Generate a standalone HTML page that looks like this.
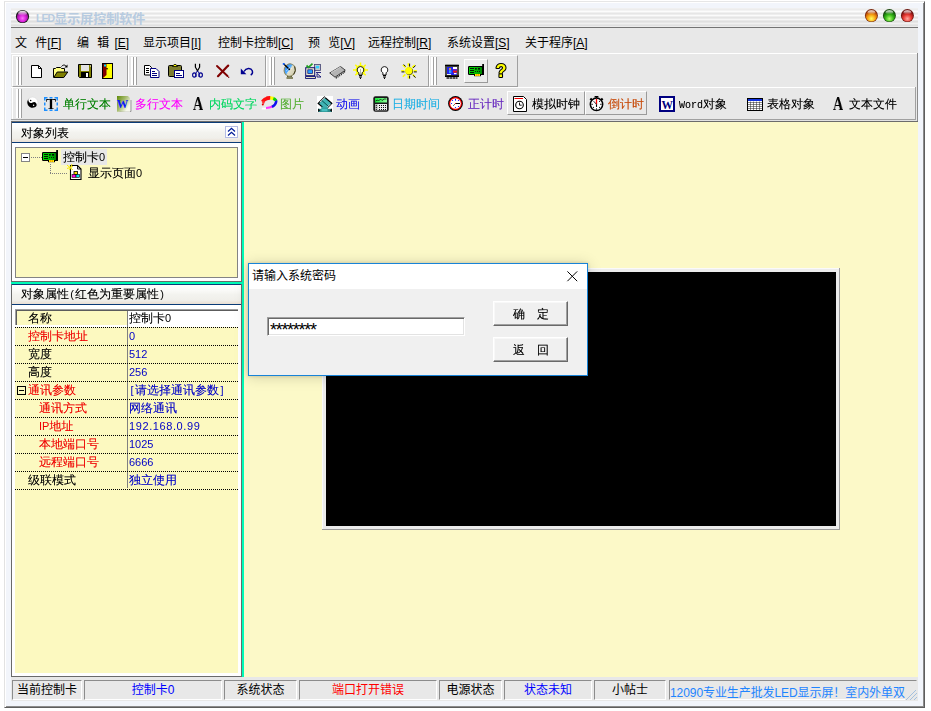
<!DOCTYPE html>
<html lang="zh-CN">
<head>
<meta charset="utf-8">
<title>LED显示屏控制软件</title>
<style>
html,body{margin:0;padding:0;}
body{width:931px;height:711px;overflow:hidden;background:#fff;position:relative;
  font-family:"Liberation Sans","WenQuanYi Zen Hei",sans-serif;font-size:12px;color:#000;}
.a{position:absolute;}
.ya{font-family:"Liberation Sans","Noto Sans CJK SC",sans-serif;}
.ss{font-family:"Liberation Sans","WenQuanYi Zen Hei",sans-serif;text-shadow:0 0 0 rgba(0,0,0,.4);opacity:.999;will-change:transform;}
.t{position:absolute;white-space:pre;line-height:14px;height:14px;font-size:12px;}
svg{position:absolute;overflow:visible;}

/* window frame */
#frame{left:4px;top:1px;width:921px;height:707px;box-sizing:border-box;background:#f2f5fb;
  border-left:1px solid #e2e2e2;border-top:1px solid #e6e6e6;border-right:1px solid #5e5e5e;border-bottom:1px solid #5e5e5e;box-shadow:inset 1px 1px 0 0 #fff,inset -1px -1px 0 0 #8c8c8c;}
#app{left:11px;top:8px;width:907px;height:693px;background:#e8e8e8;}
#title{left:11px;top:8px;width:907px;height:19px;background:linear-gradient(to bottom,#f0f0f0 0px,#f0f0f0 1px,#ececec 1px,#ececec 2px,#f3f3f3 2px,#f3f3f3 3px,#fcfcfc 3px,#fcfcfc 4px,#f0f0f0 4px,#f0f0f0 5px,#e6e6e6 5px,#e6e6e6 6px,#eeeeee 6px,#eeeeee 7px,#fbfbfb 7px,#fbfbfb 8px,#eeeeee 8px,#eeeeee 9px,#e4e4e4 9px,#e4e4e4 10px,#ebebeb 10px,#ebebeb 11px,#f6f6f6 11px,#f6f6f6 12px,#e8e8e8 12px,#e8e8e8 13px,#dfdfdf 13px,#dfdfdf 14px,#e6e6e6 14px,#e6e6e6 15px,#f0f0f0 15px,#f0f0f0 16px,#e6e6e6 16px,#e6e6e6 17px,#e0e0e0 17px,#e0e0e0 18px,#ebebeb 18px,#ebebeb 19px);}
#titleline{left:11px;top:27px;width:907px;height:1px;background:#737373;}
#titletxt{left:36px;top:10px;font-size:13px;font-weight:bold;color:#b7cbe0;line-height:18px;height:18px;}

/* menu */
.m{top:36px;}
.w5{word-spacing:5px;}.w2{word-spacing:1.700px;}

/* toolbars */
.hl{background:#fff;}
.sh{background:#a0a0a0;}
.band{box-sizing:border-box;border-top:1px solid #fff;border-left:1px solid #fff;border-right:1px solid #a0a0a0;border-bottom:1px solid #a0a0a0;}
.grip{width:3px;box-sizing:border-box;background:#fff;border-right:1px solid #a0a0a0;}
.btn{box-sizing:border-box;border-top:1px solid #fff;border-left:1px solid #fff;border-right:1px solid #9a9a9a;border-bottom:1px solid #9a9a9a;}

/* left panels */
.hdr{box-sizing:border-box;border-top:1px solid #0b3c78;border-bottom:1px solid #0b3c78;
  background:linear-gradient(to bottom,#ffffff 0%,#fcfcfa 22%,#f3f3ef 50%,#f0efea 80%,#eadfd3 100%);}
.dot{height:1px;background-image:repeating-linear-gradient(to right,#000 0,#000 1px,transparent 1px,transparent 2px);}

.v{color:#0000c8;text-shadow:0 0 0 rgba(0,0,200,.4);}
.r{color:#f00000;text-shadow:0 0 0 rgba(240,0,0,.4);}
.ns{text-shadow:none;}
.g{opacity:.999;will-change:transform;}
.n{font-size:11px;text-shadow:none;}
.b{display:inline-block;width:6px;text-align:center;}
/* status */
.sp{box-sizing:border-box;top:680px;height:20px;border-top:1px solid #8c8c8c;border-left:1px solid #8c8c8c;border-right:1px solid #fff;border-bottom:1px solid #fff;}
.st{top:683px;text-align:center;}
</style>
</head>
<body>
<div class="a" id="frame"></div>
<div class="a" id="app"></div>

<!-- title bar -->
<div class="a" id="title"></div>
<div class="a" id="titleline"></div>
<svg style="left:15px;top:8.500px" width="15" height="15" viewBox="0 0 15 15">
  <defs>
    <radialGradient id="gm" cx="50%" cy="62%" r="55%"><stop offset="0" stop-color="#ff70ff"/><stop offset=".55" stop-color="#d820d8"/><stop offset="1" stop-color="#8a108a"/></radialGradient>
    <radialGradient id="go" cx="50%" cy="75%" r="65%"><stop offset="0" stop-color="#ffff60"/><stop offset=".55" stop-color="#f8a010"/><stop offset="1" stop-color="#b04008"/></radialGradient>
    <radialGradient id="gg" cx="50%" cy="75%" r="65%"><stop offset="0" stop-color="#b0ff70"/><stop offset=".55" stop-color="#38b818"/><stop offset="1" stop-color="#106008"/></radialGradient>
    <radialGradient id="gr" cx="50%" cy="75%" r="65%"><stop offset="0" stop-color="#ffa8a0"/><stop offset=".55" stop-color="#e83830"/><stop offset="1" stop-color="#801010"/></radialGradient>
    <linearGradient id="gl" x1="0" y1="0" x2="0" y2="1"><stop offset="0" stop-color="#fff" stop-opacity=".95"/><stop offset="1" stop-color="#fff" stop-opacity="0"/></linearGradient>
  </defs>
  <circle cx="7.5" cy="7.5" r="6.6" fill="#1c1c1c"/>
  <circle cx="7.5" cy="7.9" r="5.6" fill="url(#gm)"/>
  <ellipse cx="7.5" cy="4.3" rx="4.3" ry="2.6" fill="url(#gl)"/>
</svg>
<div class="t a ya" id="titletxt"><span style="font-size:10.500px;letter-spacing:-.900px;position:relative;top:-1px">LED</span>显示屏控制软件</div>
<svg style="left:864px;top:8px" width="52" height="16" viewBox="0 0 52 16">
  <circle cx="7.4" cy="7.6" r="6.5" fill="#7a2a10"/><circle cx="7.4" cy="7.9" r="5.7" fill="url(#go)"/><ellipse cx="7.4" cy="4.2" rx="3.8" ry="2" fill="url(#gl)"/>
  <circle cx="25.4" cy="7.6" r="6.5" fill="#1c4a12"/><circle cx="25.4" cy="7.9" r="5.7" fill="url(#gg)"/><ellipse cx="25.4" cy="4.2" rx="3.8" ry="2" fill="url(#gl)"/>
  <circle cx="43.4" cy="7.6" r="6.5" fill="#6a1410"/><circle cx="43.4" cy="7.9" r="5.7" fill="url(#gr)"/><ellipse cx="43.4" cy="4.2" rx="3.8" ry="2" fill="url(#gl)"/>
</svg>

<!-- menu bar -->
<div class="t a ya m" style="left:15px">文<span class="w5"> </span>件[<u>F</u>]</div>
<div class="t a ya m" style="left:77px">编<span class="w5"> </span>辑<span class="w2"> </span>[<u>E</u>]</div>
<div class="t a ya m" style="left:143px">显示项目[<u>I</u>]</div>
<div class="t a ya m" style="left:218px">控制卡控制[<u>C</u>]</div>
<div class="t a ya m" style="left:308px">预<span class="w5"> </span>览[<u>V</u>]</div>
<div class="t a ya m" style="left:368px">远程控制[<u>R</u>]</div>
<div class="t a ya m" style="left:447px">系统设置[<u>S</u>]</div>
<div class="t a ya m" style="left:525px">关于程序[<u>A</u>]</div>

<!--TOOLBARS-->
<!-- toolbar 1 -->
<div class="a hl" style="left:11px;top:53px;width:907px;height:1px"></div>
<div class="a" style="left:917px;top:53px;width:1px;height:68px;background:#8c8c8c"></div>
<div class="a band" style="left:12px;top:55px;width:116px;height:32px"></div>
<div class="a band" style="left:128px;top:55px;width:138px;height:32px"></div>
<div class="a band" style="left:266px;top:55px;width:163px;height:32px"></div>
<div class="a band" style="left:429px;top:55px;width:89px;height:32px"></div>
<div class="a grip" style="left:16px;top:57px;height:28px"></div><div class="a grip" style="left:19px;top:57px;height:28px"></div>
<div class="a grip" style="left:131px;top:57px;height:28px"></div><div class="a grip" style="left:134px;top:57px;height:28px"></div>
<div class="a grip" style="left:269px;top:57px;height:28px"></div><div class="a grip" style="left:272px;top:57px;height:28px"></div>
<div class="a grip" style="left:431px;top:57px;height:28px"></div><div class="a grip" style="left:434px;top:57px;height:28px"></div>

<!-- new -->
<svg style="left:31px;top:65px" width="12" height="13" viewBox="0 0 12 13"><path d="M.5.5h7l3 3v9h-10z" fill="#fff" stroke="#000"/><path d="M7.5.5v3h3" fill="none" stroke="#000"/></svg>
<!-- open -->
<svg style="left:53px;top:64px" width="16" height="14" viewBox="0 0 16 14"><path d="M.5 13.500v-9h2l1-1h4l1 1h3v3" fill="#ffff80" stroke="#000"/><path d="M.8 13.500l3.400-5.500h10.600l-4 5.500z" fill="#808000" stroke="#000"/><path d="M8.500 2.500c1.500-2 4-2 5 .5" fill="none" stroke="#000"/><path d="M11.500 3.500h3v-3z" fill="#000"/></svg>
<!-- save -->
<svg style="left:78px;top:64px" width="14" height="14" viewBox="0 0 14 14"><path d="M.5.5h13v13h-12l-1-1z" fill="#808000" stroke="#000"/><rect x="3" y="1" width="8" height="6" fill="#e4e4e4"/><rect x="3" y="8" width="8" height="5.500" fill="#000"/><rect x="8" y="9" width="2" height="4" fill="#fff"/><rect x="12" y="1.500" width="1" height="1" fill="#fff"/></svg>
<!-- exit -->
<svg style="left:102px;top:63px" width="11" height="16" viewBox="0 0 11 16"><rect x=".5" y=".5" width="10" height="15" fill="#ffff00" stroke="#000"/><path d="M1 1h3.500v11l-3.500 3z" fill="#800000"/><rect x="2" y="1.500" width="2" height="2" fill="#00e0ff"/><rect x="4.300" y="5" width="1.400" height="1.400" fill="#000"/></svg>
<!-- copy -->
<svg style="left:144px;top:65px" width="16" height="13" viewBox="0 0 16 13"><path d="M.5.500h5l2 2v7.500h-7z" fill="#fff" stroke="#000"/><path d="M2 3.500h3M2 5.500h3M2 7.500h3" stroke="#000"/><path d="M6.500 3.500h5.500l3 3v6h-8.500z" fill="#fff" stroke="#000080"/><path d="M8 6.500h3M8 8.500h5M8 10.500h5" stroke="#000080"/></svg>
<!-- paste -->
<svg style="left:168px;top:64px" width="16" height="14" viewBox="0 0 16 14"><rect x=".5" y="1.500" width="13" height="11" rx="1" fill="#7c7c30" stroke="#000"/><path d="M4.500 2.500l1.500-2h2l1.500 2z" fill="#ffff00" stroke="#000" stroke-width=".8"/><rect x="6.500" y="6.500" width="9" height="7" fill="#fff" stroke="#000080"/><path d="M8 9.500h4M8 11.500h6" stroke="#000080"/></svg>
<!-- cut -->
<svg style="left:192px;top:63px" width="11" height="15" viewBox="0 0 11 15"><path d="M3.400 .8v3.400l2.100 3.600l2.100-3.600v-3.400" fill="none" stroke="#000" stroke-width="1.200"/><path d="M5.500 7.800l-1.600 2.200v4M5.500 7.800l1.600 2.200v4" fill="none" stroke="#000090" stroke-width="1"/><ellipse cx="2.300" cy="12" rx="1.700" ry="2.100" fill="none" stroke="#000090" stroke-width="1.100"/><ellipse cx="8.700" cy="12" rx="1.700" ry="2.100" fill="none" stroke="#000090" stroke-width="1.100"/></svg>
<!-- delete -->
<svg style="left:216px;top:65px" width="14" height="13" viewBox="0 0 14 13"><path d="M1 1l10.500 10" stroke="#800000" stroke-width="1.900" fill="none" stroke-linecap="round"/><path d="M12.200 .6l-10.200 10.600" stroke="#800000" stroke-width="2.200" fill="none" stroke-linecap="round"/><circle cx="12.700" cy="12.300" r=".7" fill="#800000"/></svg>
<!-- undo -->
<svg style="left:240px;top:67px" width="14" height="9" viewBox="0 0 14 9"><path d="M4 4.500c2-3.800 7-4 8.300-.8c.6 1.800-.2 3.600-1.600 4.300" fill="none" stroke="#000090" stroke-width="1.400"/><path d="M.8 1.600v5.600h5.600z" fill="#000090"/></svg>
<!-- dish -->
<svg style="left:282px;top:62px" width="15" height="17" viewBox="0 0 15 17"><defs><linearGradient id="dsh" x1="0" y1="0" x2="1" y2=".3"><stop offset="0" stop-color="#1878ff"/><stop offset=".5" stop-color="#58b0ff"/><stop offset=".62" stop-color="#e4e0c8"/><stop offset="1" stop-color="#d4d0b4"/></linearGradient></defs><path d="M5 14.500h5M7.500 13.500v1.500" stroke="#585830" stroke-width="1.200"/><path d="M4.500 16h6.500" stroke="#6c6c40" stroke-width="1.600"/><ellipse cx="7.800" cy="8" rx="5.600" ry="6.200" fill="url(#dsh)" stroke="#8c8860" stroke-width="1" transform="rotate(18 7.800 8)"/><path d="M12.600 4.500q2 4-1 8" fill="none" stroke="#403c20" stroke-width="1"/><path d="M1.800 2l6.200 6" stroke="#000" stroke-width="1.300"/><path d="M4 9l4-4M5 11l5-5" stroke="#fff" stroke-width=".6" opacity=".7"/><rect x=".8" y="1" width="1.800" height="1.800" fill="#1060ff"/></svg>
<!-- computer -->
<svg style="left:305px;top:63px" width="17" height="16" viewBox="0 0 17 16"><rect x="9.500" y="1.500" width="6" height="6" fill="#c8c8c8" stroke="#404070" stroke-width=".8"/><rect x="10.800" y="2.800" width="3.400" height="2.600" fill="#30d0ff"/><rect x=".7" y="4.700" width="9" height="8" fill="#ece8cc" stroke="#101070" stroke-width="1"/><rect x="2.800" y="6.800" width="4.800" height="3.600" fill="#28a0ff" stroke="#101070" stroke-width=".7"/><path d="M.5 13.500h10v2h-10z" fill="#e4e0c4" stroke="#101070" stroke-width=".9"/><path d="M1.500 2.500l2 1.800l4-3.600" stroke="#20a020" stroke-width="1.700" fill="none"/><path d="M11 9.500h5M12 10.500l4 3.500h-4z" stroke="#101070" stroke-width=".9" fill="none"/></svg>
<!-- chip -->
<svg style="left:329px;top:65px" width="17" height="14" viewBox="0 0 17 14"><path d="M.7 8l10.800-6.500l4.800 3.700l-10.300 7z" fill="#b4b4b4" stroke="#303030" stroke-width=".9"/><path d="M2 7.700l9.400-5.600" stroke="#e0e0e0" stroke-width=".8"/><path d="M7.300 11.800v1.800M9 10.700v1.800M10.700 9.500v1.800M12.400 8.400v1.800M14.100 7.200v1.800M15.600 6v1.600" stroke="#202020" stroke-width="1"/></svg>
<!-- bulb on -->
<svg style="left:353px;top:62px" width="16" height="17" viewBox="0 0 16 17"><path d="M7.500 .5v4M2.300 2.800l3 3M12.700 2.800l-3 3M0 8h4M15 8h-4M2.300 13.200l3-2.500M12.700 13.200l-3-2.500" stroke="#ffff00" stroke-width="1.500"/><circle cx="7.500" cy="8" r="5" fill="#ffff00"/><g transform="translate(3 4)"><path d="M4.500 .6a3.300 3.300 0 0 1 1.600 6.200v2.200h-3.200v-2.200a3.300 3.300 0 0 1 1.600-6.200z" fill="#fffff0" stroke="#000" stroke-width=".9"/><path d="M3 9.500h3M3 11h3M4 12.400h1" stroke="#000" stroke-width="1.200"/><path d="M4.500 3v5" stroke="#808080" stroke-width=".6"/></g></svg>
<!-- bulb off -->
<svg style="left:380px;top:66px" width="9" height="13" viewBox="0 0 9 13"><path d="M4.500 .6a3.300 3.300 0 0 1 1.600 6.200v2.200h-3.200v-2.200a3.300 3.300 0 0 1 1.600-6.200z" fill="#fff" stroke="#000" stroke-width=".9"/><path d="M3 9.500h3M3 11h3M4 12.400h1" stroke="#000" stroke-width="1.200"/></svg>
<!-- sun -->
<svg style="left:401px;top:63px" width="16" height="16" viewBox="0 0 16 16"><path d="M7.300 .3v3.200M7.300 12.300v3.200M.2 7.700h3.300M12.500 7.700h3.300M1.800 2l2.600 2.400M11.600 11.400l2.600 2.400M13.800 2l-2.600 2.400M4.400 11.400l-2.600 2.400" stroke="#ffff00" stroke-width="1.500"/><path d="M8.600 .6v3M8.600 12.600v3M.5 8.900h3M12.800 8.900h3M12.200 12.400l2.400 2.200M14.600 2.600l-2.400 2.200M2.600 1.600l2 1.800" stroke="#101000" stroke-width="1"/><circle cx="8.300" cy="8.300" r="3.700" fill="#303000"/><circle cx="7.800" cy="7.700" r="3.700" fill="#ffff00"/></svg>
<!-- monitor -->
<svg style="left:445px;top:64px" width="14" height="15" viewBox="0 0 14 15"><rect x="0" y=".8" width="14" height="12" rx=".8" fill="#4a4a40"/><rect x="0" y=".8" width="14" height="1.400" fill="#000"/><rect x="0" y="11.400" width="14" height="1.600" fill="#000"/><rect x="2" y="3" width="10" height="8" fill="#2424f0"/><rect x="8" y="3" width="4" height="2" fill="#fff"/><rect x="8" y="5" width="4" height="1.600" fill="#7020d0"/><rect x="8" y="6.600" width="4" height="2" fill="#e81818"/><rect x="9" y="9" width="2.500" height="1.200" fill="#fff"/><rect x="2" y="10" width="4" height="1" fill="#f0f0f0"/><circle cx="5" cy="5" r="1" fill="#ffc000"/><rect x="4" y="6.200" width="2.400" height="3" fill="#30a0ff"/><path d="M1.500 14h11" stroke="#202020" stroke-width="1.400" stroke-dasharray="2.500 .5"/></svg>
<!-- card button -->
<div class="a btn" style="left:464px;top:59px;width:24px;height:24px;background:#ececec"></div>
<svg style="left:468px;top:64px" width="17" height="13" viewBox="0 0 17 13"><g id="card"><defs><linearGradient id="cg" x1="0" y1="0" x2="1" y2="0"><stop offset="0" stop-color="#00dc00"/><stop offset=".6" stop-color="#00b400"/><stop offset="1" stop-color="#008800"/></linearGradient></defs><rect x="14.200" y="0" width="1.800" height="11" fill="#000"/><rect x="0" y="2" width="15.500" height="9" rx="1.200" fill="#000"/><rect x="1" y="3" width="13" height="7" rx=".6" fill="url(#cg)"/><path d="M2 4.500h4M2 6.500h4M2 8.500h4" stroke="#001800" stroke-width="1"/><rect x="7" y="4" width="1.700" height="1.600" fill="#001000"/><rect x="10" y="4" width="2" height="1.600" fill="#001000"/><rect x="7" y="7" width="1" height="1" fill="#002800"/><rect x="9" y="7" width="1" height="1" fill="#002800"/><rect x="11" y="7" width="1" height="1" fill="#002800"/><rect x="6" y="10" width="7" height="2.200" fill="#000"/><rect x="7" y="10" width="5" height="2" fill="#ffee00"/><path d="M8.700 10v2M10.400 10v2" stroke="#e08000" stroke-width=".7"/></g></svg>
<!-- help -->
<svg style="left:494px;top:62px;opacity:.999;will-change:transform" width="14" height="17" viewBox="0 0 14 17"><text x="1.700" y="15.200" font-family="Liberation Sans,sans-serif" font-weight="bold" font-size="17.500" fill="#ffff00" stroke="#000" stroke-width="2.200" paint-order="stroke" stroke-linejoin="round">?</text></svg>

<!-- toolbar 2 -->
<div class="a hl" style="left:11px;top:87px;width:905px;height:1px"></div>
<div class="a hl" style="left:12px;top:88px;width:1px;height:31px"></div>
<div class="a sh" style="left:11px;top:119px;width:905px;height:1px"></div>
<div class="a sh" style="left:915px;top:87px;width:1px;height:33px"></div>
<div class="a" style="left:11px;top:120px;width:906px;height:1px;background:#e2e2e2"></div>
<div class="a" style="left:11px;top:121px;width:907px;height:1px;background:#6c6c6c;z-index:3"></div>
<div class="a grip" style="left:16px;top:89px;height:29px"></div><div class="a grip" style="left:19px;top:89px;height:29px"></div>

<!-- yin yang -->
<svg style="left:27px;top:97px" width="11" height="11" viewBox="0 0 11 11"><circle cx="5.500" cy="5.500" r="5.400" fill="#fff" stroke="#d0d0d0" stroke-width=".4"/><path d="M5.500 .2a5.300 5.300 0 0 0 0 10.600a2.650 2.650 0 0 0 0-5.300a2.650 2.650 0 0 1 0-5.300z" fill="#000" transform="rotate(-32 5.500 5.500)"/><circle cx="3.700" cy="3.500" r=".75" fill="#000"/><circle cx="6.600" cy="8.300" r=".75" fill="#fff"/></svg>
<!-- T -->
<svg style="left:44px;top:97px" width="14" height="14" viewBox="0 0 14 14"><path d="M0 .75h3.500M5.500 .75h3M10.500 .75h3.500M0 13.250h3.500M5.500 13.250h3M10.500 13.250h3.500M.75 0v3.500M.75 5.500v3M.75 10.500v3.500M13.250 0v3.500M13.250 5.500v3M13.250 10.500v3.500" fill="none" stroke="#1e90ff" stroke-width="1.500"/></svg>
<div class="t a g" style="left:46px;top:96px;font:bold 15px/16px 'Liberation Serif',serif;height:16px">T</div>
<div class="t a ss" style="left:63px;top:97px;color:#008000;text-shadow:0 0 0 rgba(0,128,0,.4)">单行文本</div>
<!-- W page -->
<svg style="left:117px;top:96px" width="15" height="17" viewBox="0 0 15 17"><defs><linearGradient id="wg" x1="0" y1="0" x2="1" y2=".75"><stop offset="0" stop-color="#5f8a08"/><stop offset=".45" stop-color="#a2b868"/><stop offset=".9" stop-color="#f6f8ec"/></linearGradient></defs><path d="M2.500 15.500h11.500v-11.500" fill="none" stroke="#9a9a9a" stroke-width="1"/><path d="M0 0h11l2 2v13.800h-13z" fill="url(#wg)"/><text x="-.3" y="12" font-family="Liberation Serif,serif" font-weight="bold" font-size="11.500" fill="#0818ff">W</text></svg>
<div class="t a ss" style="left:135px;top:97px;color:#ff00ff;text-shadow:0 0 0 rgba(255,0,255,.4)">多行文本</div>
<div class="t a g" style="left:193px;top:94px;font:bold 18px/20px 'Liberation Serif',serif;height:20px;transform:scaleX(.78);transform-origin:0 0">A</div>
<div class="t a ss" style="left:209px;top:97px;color:#00d860;text-shadow:0 0 0 rgba(0,216,96,.4)">内码文字</div>
<!-- palette -->
<svg style="left:261px;top:96px" width="17" height="14" viewBox="0 0 17 14"><g fill="none" stroke-linecap="butt"><path d="M.8 12.600q2.500 .2 5-.6" stroke="#fff" stroke-width="1.800"/><path d="M5 12.100q3.500-.3 6.500-1.600" stroke="#ff30ff" stroke-width="2"/><path d="M11 10.800q3.800-2 4.200-5.200q.1-.9-.4-1.600" stroke="#1010f0" stroke-width="2.500"/><path d="M15 4.600q-.9-1.700-3.200-2.400" stroke="#10d010" stroke-width="3"/><path d="M12.300 2.400q-1.500-.6-3.400-.6" stroke="#ffff00" stroke-width="3.200"/><path d="M9.200 1.900q-4.800-.2-7.700 3.600" stroke="#ff1010" stroke-width="3.600"/><path d="M1.500 5l1.500 2.500" stroke="#ff3030" stroke-width="2.200"/></g><circle cx="1.800" cy="8.600" r="1" fill="#e00000"/></svg>
<div class="t a ss" style="left:280px;top:97px;color:#58b038;text-shadow:0 0 0 rgba(88,176,56,.4)">图片</div>
<!-- anim -->
<svg style="left:317px;top:96px" width="16" height="16" viewBox="0 0 16 16"><rect width="16" height="16" fill="#fff"/><path d="M1.200 7.500l6.300-6.500l7.300 6.300l-6.300 6.500z" fill="#40b4b4" stroke="#000" stroke-width="1.200"/><path d="M2.800 6.300l6.300-6" stroke="#fff" stroke-width=".9"/><path d="M13.300 8.200l-5.500 5.500" stroke="#fff" stroke-width=".9"/><path d="M4.600 4.300l7 6.200" stroke="#004848" stroke-width=".9"/><path d="M4.300 10.400v3h6.500v-2.500" fill="#38a8a8"/><path d="M1 12.800h14v3.200h-14z" fill="#2c8c8c"/><rect x="4.500" y="13" width="6" height="2.400" fill="#48c0c0"/><path d="M1 12.500l2.200 1.700l-2.200 1.800zM15 12.500l-2.200 1.700l2.200 1.800z" fill="#101010"/></svg>
<div class="t a ss" style="left:336px;top:97px;color:#1414f0;text-shadow:0 0 0 rgba(34,34,221,.4)">动画</div>
<!-- calendar -->
<svg style="left:373px;top:96px" width="16" height="16" viewBox="0 0 16 16"><defs><linearGradient id="cal" x1="0" y1="0" x2="1" y2="0"><stop offset="0" stop-color="#18e838"/><stop offset="1" stop-color="#90ffa0"/></linearGradient></defs><rect x=".3" y=".3" width="15.400" height="15.400" rx="2.200" fill="#181818"/><rect x="2" y="2" width="12" height="4.500" fill="url(#cal)"/><path d="M2.500 5l2-1l1 1l2-2l1.500 1.500l2-1.500h2.500" stroke="#002000" stroke-width=".8" fill="none"/><rect x="2" y="8" width="12" height="6.300" fill="#ececec"/><rect x="2" y="8" width="2.600" height="6.300" fill="#b8b8b8"/><g fill="#101010"><rect x="6" y="9" width="1" height="1"/><rect x="8" y="9" width="1" height="1"/><rect x="10" y="9" width="1" height="1"/><rect x="12" y="9" width="1" height="1"/><rect x="6" y="11" width="1" height="1"/><rect x="8" y="11" width="1" height="1"/><rect x="10" y="11" width="1" height="1"/><rect x="12" y="11" width="1" height="1"/><rect x="6" y="13" width="1" height="1"/><rect x="8" y="13" width="1" height="1"/><rect x="10" y="13" width="1" height="1"/><rect x="12" y="13" width="1" height="1"/><rect x="2.800" y="9" width="1" height="1"/><rect x="2.800" y="11" width="1" height="1"/><rect x="2.800" y="13" width="1" height="1"/></g></svg>
<div class="t a ss" style="left:392px;top:97px;color:#20b0e4;text-shadow:0 0 0 rgba(32,176,228,.4)">日期时间</div>
<!-- clock -->
<svg style="left:448px;top:96px" width="15" height="15" viewBox="0 0 15 15"><circle cx="7.500" cy="7.500" r="7.400" fill="#000"/><circle cx="7.500" cy="7.500" r="6.400" fill="#ff0000"/><circle cx="7.500" cy="7.500" r="5.300" fill="#fff"/><g fill="#0000ff"><rect x="7" y="2.800" width="1" height="1.800"/><circle cx="4.500" cy="4.500" r=".6"/><circle cx="10.500" cy="4.500" r=".6"/><circle cx="3.500" cy="7.500" r=".6"/><circle cx="10.500" cy="10.500" r=".6"/><circle cx="7.500" cy="11.500" r=".6"/></g><path d="M7.500 7.500h4.500" stroke="#000" stroke-width="1"/><path d="M7.500 7.500l-2.300 2.300" stroke="#000" stroke-width="1" stroke-dasharray="1.200 .5"/><circle cx="7.500" cy="7.500" r=".6" fill="#ff0000"/></svg>
<div class="t a ss" style="left:468px;top:97px;color:#6a2cc0;text-shadow:0 0 0 rgba(106,44,192,.4)">正计时</div>
<!-- button analog clock -->
<div class="a btn" style="left:507px;top:91px;width:78px;height:24px"></div>
<svg style="left:513px;top:96px" width="14" height="16" viewBox="0 0 14 16"><path d="M.5 .5h10l3 3v12h-13z" fill="#fff" stroke="#000"/><path d="M1.500 2.500h8.500" stroke="#f00000" stroke-width="1"/><circle cx="6.500" cy="9" r="3.800" fill="none" stroke="#000" stroke-width="1.100"/><path d="M6.500 6.500v2.700h2.200" stroke="#000" stroke-width=".9" fill="none"/></svg>
<div class="t a ss" style="left:532px;top:97px">模拟时钟</div>
<!-- button countdown -->
<div class="a btn" style="left:585px;top:91px;width:62px;height:24px"></div>
<svg style="left:589px;top:96px" width="15" height="15" viewBox="0 0 15 15"><path d="M5.600 .7h3.800" stroke="#000" stroke-width="1.400"/><path d="M7.500 .7v2" stroke="#000" stroke-width="1.200"/><path d="M1.300 2.600l2.400 2M13.700 2.600l-2.400 2" stroke="#000" stroke-width="2.200"/><circle cx="7.500" cy="8.300" r="6.200" fill="#fff" stroke="#000" stroke-width="1.500"/><path d="M7.500 8.300v-5.300" stroke="#ff0000" stroke-width="1.300"/><path d="M7.500 8.300v2.600" stroke="#000" stroke-width="1.100"/><path d="M7.500 8.300l-3-3.200" stroke="#000" stroke-width=".8"/><path d="M2.300 8.300h1.600M11.100 8.300h1.600M7.500 12.300v1.400" stroke="#000" stroke-width=".9"/><g fill="#000"><circle cx="10.600" cy="5.300" r=".6"/><circle cx="4.500" cy="11.300" r=".6"/><circle cx="10.600" cy="11.300" r=".6"/></g></svg>
<div class="t a ss" style="left:608px;top:97px;color:#c84a08;text-shadow:0 0 0 rgba(200,74,8,.4)">倒计时</div>
<!-- word -->
<svg style="left:659px;top:96px" width="16" height="16" viewBox="0 0 16 16"><rect width="16" height="16" fill="#000080"/><rect x="2" y="2" width="12" height="12" fill="#fff"/><text x="2.600" y="12.800" font-family="Liberation Serif,serif" font-weight="bold" font-size="13" fill="#000080" textLength="11.500" lengthAdjust="spacingAndGlyphs">W</text></svg>
<div class="t a ss" style="left:679px;top:97px"><span style="font:10px/14px 'Liberation Mono',monospace">Word</span>对象</div>
<!-- table -->
<svg style="left:747px;top:98px" width="16" height="13" viewBox="0 0 16 13"><rect x=".5" y=".5" width="15" height="12" fill="#fff" stroke="#000"/><rect x="1" y="1" width="14" height="2" fill="#1030e0"/><path d="M1 4.500h14M1 6.500h14M1 8.500h14M1 10.500h14M3.500 3.500v8.500M6.500 3.500v8.500M9.500 3.500v8.500M12.500 3.500v8.500" stroke="#303030" stroke-width=".55"/></svg>
<div class="t a ss" style="left:767px;top:97px">表格对象</div>
<div class="t a g" style="left:833px;top:94px;font:bold 18px/20px 'Liberation Serif',serif;height:20px;transform:scaleX(.78);transform-origin:0 0">A</div>
<div class="t a ss" style="left:849px;top:97px">文本文件</div>
<!--/TOOLBARS-->
<!--LEFT-->
<!-- main yellow area -->
<div class="a" style="left:244px;top:122px;width:674px;height:555px;background:#fcf9c8"></div>
<!-- left panel -->
<div class="a" style="left:11px;top:121px;width:231px;height:556px;background:#fff;box-sizing:border-box;border-left:1px solid #6a6a6a;border-right:1px solid #6a6a6a;border-bottom:1px solid #6a6a6a;border-top:1px solid #746a60"></div>
<div class="a" style="left:242px;top:122px;width:2px;height:555px;background:#00fab6"></div>
<!-- header 1 -->
<div class="a hdr" style="left:12px;top:122px;width:229px;height:21px"></div>
<div class="t a ss" style="left:21px;top:126px">对象列表</div>
<div class="a" style="left:225px;top:126px;width:13px;height:12px;box-sizing:border-box;border:1px solid #b4bce4;background:#fff"></div>
<svg style="left:227px;top:127px" width="9" height="10" viewBox="0 0 9 10"><path d="M1 4.500l3.500-3.200l3.500 3.200M1 8.500l3.500-3.200l3.500 3.200" fill="none" stroke="#001c98" stroke-width="1.250"/></svg>
<!-- tree box -->
<div class="a" style="left:15px;top:147px;width:223px;height:131px;box-sizing:border-box;border:1px solid #848484;background:#fcf9c0"></div>
<div class="a" style="left:21px;top:153px;width:9px;height:9px;box-sizing:border-box;border:1px solid #848484;background:#fff"></div>
<div class="a" style="left:23px;top:157px;width:5px;height:1px;background:#000"></div>
<div class="a" style="left:31px;top:157px;width:11px;height:1px;background-image:repeating-linear-gradient(to right,#808080 0,#808080 1px,transparent 1px,transparent 2px)"></div>
<div class="a" style="left:50px;top:164px;width:1px;height:10px;background-image:repeating-linear-gradient(to bottom,#808080 0,#808080 1px,transparent 1px,transparent 2px)"></div>
<div class="a" style="left:50px;top:173px;width:18px;height:1px;background-image:repeating-linear-gradient(to right,#808080 0,#808080 1px,transparent 1px,transparent 2px)"></div>
<svg style="left:42px;top:150px" width="17" height="13" viewBox="0 0 17 13"><use href="#card"/></svg>
<div class="a" style="left:61px;top:149px;width:46px;height:16px;background:#e8e8e8"></div>
<div class="t a ss" style="left:63px;top:150px">控制卡<span class="n">0</span></div>
<!-- page icon -->
<svg style="left:67px;top:164px" width="15" height="16" viewBox="0 0 15 16"><path d="M3.500 1.500h7l3.500 3.500v10.500h-10.500z" fill="#fff" stroke="#000" stroke-width="1.100"/><path d="M10.500 1.500v3.500h3.500" fill="none" stroke="#000" stroke-width=".9"/><rect x="7" y="7.500" width="3.500" height="3" fill="#ffe000" stroke="#000" stroke-width=".8"/><rect x="5" y="10.500" width="4" height="2.800" fill="#ff00e0" stroke="#000" stroke-width=".6"/><rect x="9" y="10.500" width="3.500" height="2.800" fill="#00e0f0" stroke="#000" stroke-width=".6"/><path d="M0 1l6 5M5 0l-2.500 6M0 4.500l6-2" stroke="#f8e800" stroke-width="1"/></svg>
<div class="t a ss" style="left:88px;top:166px">显示页面<span class="n">0</span></div>

<!-- splitter -->
<div class="a" style="left:11px;top:281px;width:231px;height:1px;background:#6a6a6a"></div>
<div class="a" style="left:11px;top:282px;width:233px;height:2px;background:#00fab6"></div>
<!-- header 2 -->
<div class="a hdr" style="left:12px;top:284px;width:229px;height:21px"></div>
<div class="t a ss" style="left:21px;top:287px">对象属性<span class="n b">(</span>红色为重要属性<span class="n b">)</span></div>
<!-- property grid -->
<div class="a" style="left:15px;top:309px;width:223px;height:364px;background:#fcf9c0"></div>
<div class="a" style="left:15px;top:309px;width:223px;height:1px;background:#a0a0a0"></div>
<div class="a" style="left:15px;top:310px;width:223px;height:1px;background:#5c5c5c"></div>
<div class="a" style="left:15px;top:309px;width:1px;height:17px;background:#a0a0a0"></div>
<div class="a" style="left:16px;top:310px;width:1px;height:16px;background:#5c5c5c"></div>
<div class="a" style="left:128px;top:311px;width:110px;height:15px;background:#fff"></div>
<div class="a" style="left:15px;top:325px;width:223px;height:2px;background:#fff"></div>
<div class="a" style="left:127px;top:311px;width:1px;height:177px;background:#808080"></div>
<div class="a dot" style="left:15px;top:327px;width:224px"></div>
<div class="a dot" style="left:15px;top:345px;width:224px"></div>
<div class="a dot" style="left:15px;top:363px;width:224px"></div>
<div class="a dot" style="left:15px;top:381px;width:224px"></div>
<div class="a dot" style="left:15px;top:399px;width:224px"></div>
<div class="a dot" style="left:15px;top:417px;width:224px"></div>
<div class="a dot" style="left:15px;top:435px;width:224px"></div>
<div class="a dot" style="left:15px;top:453px;width:224px"></div>
<div class="a dot" style="left:15px;top:471px;width:224px"></div>
<div class="a dot" style="left:15px;top:489px;width:224px"></div>
<div class="a" style="left:17px;top:386px;width:9px;height:9px;box-sizing:border-box;border:1px solid #000"></div>
<div class="a" style="left:19px;top:390px;width:5px;height:1px;background:#000"></div>
<div class="t a ss" style="left:28px;top:311px">名称</div><div class="t a ss" style="left:129px;top:311px">控制卡<span class="n">0</span></div>
<div class="t a ss r" style="left:28px;top:329px">控制卡地址</div><div class="t a ss v" style="left:129px;top:329px"><span class="n">0</span></div>
<div class="t a ss" style="left:28px;top:347px">宽度</div><div class="t a ss v" style="left:129px;top:347px"><span class="n">512</span></div>
<div class="t a ss" style="left:28px;top:365px">高度</div><div class="t a ss v" style="left:129px;top:365px"><span class="n">256</span></div>
<div class="t a ss r" style="left:28px;top:383px">通讯参数</div><div class="t a ss v" style="left:129px;top:383px"><span class="n b">[</span>请选择通讯参数<span class="n b">]</span></div>
<div class="t a ss r" style="left:39px;top:401px">通讯方式</div><div class="t a ss v" style="left:129px;top:401px">网络通讯</div>
<div class="t a ss r" style="left:39px;top:419px"><span class="n">IP</span>地址</div><div class="t a ss v" style="left:129px;top:419px"><span class="n" style="letter-spacing:.600px">192.168.0.99</span></div>
<div class="t a ss r" style="left:39px;top:437px">本地端口号</div><div class="t a ss v" style="left:129px;top:437px"><span class="n">1025</span></div>
<div class="t a ss r" style="left:39px;top:455px">远程端口号</div><div class="t a ss v" style="left:129px;top:455px"><span class="n">6666</span></div>
<div class="t a ss" style="left:28px;top:473px">级联模式</div><div class="t a ss v" style="left:129px;top:473px">独立使用</div>
<!--/LEFT-->
<!--MAIN-->
<!-- LED screen -->
<div class="a" style="left:322px;top:268px;width:518px;height:262px;box-sizing:border-box;background:#000;border:4px solid #ececec"></div>
<div class="a" style="left:322px;top:268px;width:517px;height:1px;background:#fafafa"></div>
<div class="a" style="left:322px;top:268px;width:1px;height:261px;background:#fafafa"></div>
<div class="a" style="left:839px;top:268px;width:1px;height:262px;background:#9c9c9c"></div>
<div class="a" style="left:322px;top:529px;width:518px;height:1px;background:#9c9c9c"></div>
<!-- dialog -->
<div class="a" style="left:248px;top:263px;width:340px;height:113px;box-sizing:border-box;border:1px solid #1883d7;background:#f0f0f0;box-shadow:0 0 3px rgba(0,0,0,.16),0 1px 13px rgba(0,0,0,.17)"></div>
<div class="a" style="left:249px;top:264px;width:338px;height:25px;background:#fff"></div>
<div class="t a ya" style="left:252px;top:268px;line-height:16px;height:16px">请输入系统密码</div>
<svg style="left:567px;top:271px" width="11" height="11" viewBox="0 0 11 11"><path d="M.4 .4l9.800 9.800M10.200 .4l-9.800 9.800" stroke="#000" stroke-width="1"/></svg>
<div class="a" style="left:267px;top:317px;width:198px;height:19px;box-sizing:border-box;background:#fff;border-top:1px solid #a0a0a0;border-left:1px solid #a0a0a0;border-right:1px solid #fff;border-bottom:1px solid #fff;box-shadow:inset 1px 1px 0 0 #696969,inset -1px -1px 0 0 #e3e3e3"></div>
<div class="t a" style="left:270px;top:321px;font:18px/18px 'Liberation Sans',sans-serif;height:18px;letter-spacing:-1.300px">********</div>
<div class="a" style="left:493px;top:301px;width:75px;height:25px;box-sizing:border-box;background:#f0f0f0;border-top:1px solid #fff;border-left:1px solid #fff;border-right:1px solid #696969;border-bottom:1px solid #696969;box-shadow:inset -1px -1px 0 0 #a0a0a0,inset 1px 1px 0 0 #f8f8f8"></div>
<div class="t a ss" style="left:513px;top:307px">确　定</div>
<div class="a" style="left:493px;top:337px;width:75px;height:25px;box-sizing:border-box;background:#f0f0f0;border-top:1px solid #fff;border-left:1px solid #fff;border-right:1px solid #696969;border-bottom:1px solid #696969;box-shadow:inset -1px -1px 0 0 #a0a0a0,inset 1px 1px 0 0 #f8f8f8"></div>
<div class="t a ss" style="left:513px;top:343px">返　回</div>
<!--/MAIN-->
<!--STATUS-->
<div class="a sp" style="left:12px;width:70px"></div>
<div class="a sp" style="left:84px;width:138px"></div>
<div class="a sp" style="left:224px;width:73px"></div>
<div class="a sp" style="left:299px;width:138px"></div>
<div class="a sp" style="left:439px;width:63px"></div>
<div class="a sp" style="left:504px;width:88px"></div>
<div class="a sp" style="left:594px;width:72px"></div>
<div class="a sp" style="left:669px;width:248px;border-right-color:#e8e8e8"></div>
<div class="t a ya st" style="left:12px;width:70px">当前控制卡</div>
<div class="t a ya st" style="left:84px;width:138px;color:#0000ff">控制卡0</div>
<div class="t a ya st" style="left:224px;width:73px">系统状态</div>
<div class="t a ya st" style="left:299px;width:138px;color:#ff0000">端口打开错误</div>
<div class="t a ya st" style="left:439px;width:63px">电源状态</div>
<div class="t a ya st" style="left:504px;width:88px;color:#0000ff">状态未知</div>
<div class="t a ya st" style="left:594px;width:72px">小帖士</div>
<div class="t a ya" style="left:670px;top:686px;line-height:15px;height:13px;overflow:hidden;color:#1e84ff;letter-spacing:-.080px">12090专业生产批发LED显示屏！室内外单双</div>
<div class="a" style="left:905px;top:689px;width:13px;height:12px;background:#e8e8e8"></div>
<svg style="left:905px;top:688px" width="13" height="12" viewBox="0 0 13 12"><g fill="#a4c0de"><rect x="1" y="11" width="1" height="1"/><rect x="2" y="10" width="1" height="1"/><rect x="3" y="9" width="1" height="1"/><rect x="4" y="8" width="1" height="1"/><rect x="5" y="7" width="1" height="1"/><rect x="6" y="6" width="1" height="1"/><rect x="7" y="5" width="1" height="1"/><rect x="8" y="4" width="1" height="1"/><rect x="9" y="3" width="1" height="1"/><rect x="10" y="2" width="1" height="1"/><rect x="5" y="11" width="1" height="1"/><rect x="6" y="10" width="1" height="1"/><rect x="7" y="9" width="1" height="1"/><rect x="8" y="8" width="1" height="1"/><rect x="9" y="7" width="1" height="1"/><rect x="10" y="6" width="1" height="1"/><rect x="11" y="5" width="1" height="1"/><rect x="9" y="11" width="1" height="1"/><rect x="10" y="10" width="1" height="1"/><rect x="11" y="9" width="1" height="1"/></g></svg>
<!--/STATUS-->
</body>
</html>
